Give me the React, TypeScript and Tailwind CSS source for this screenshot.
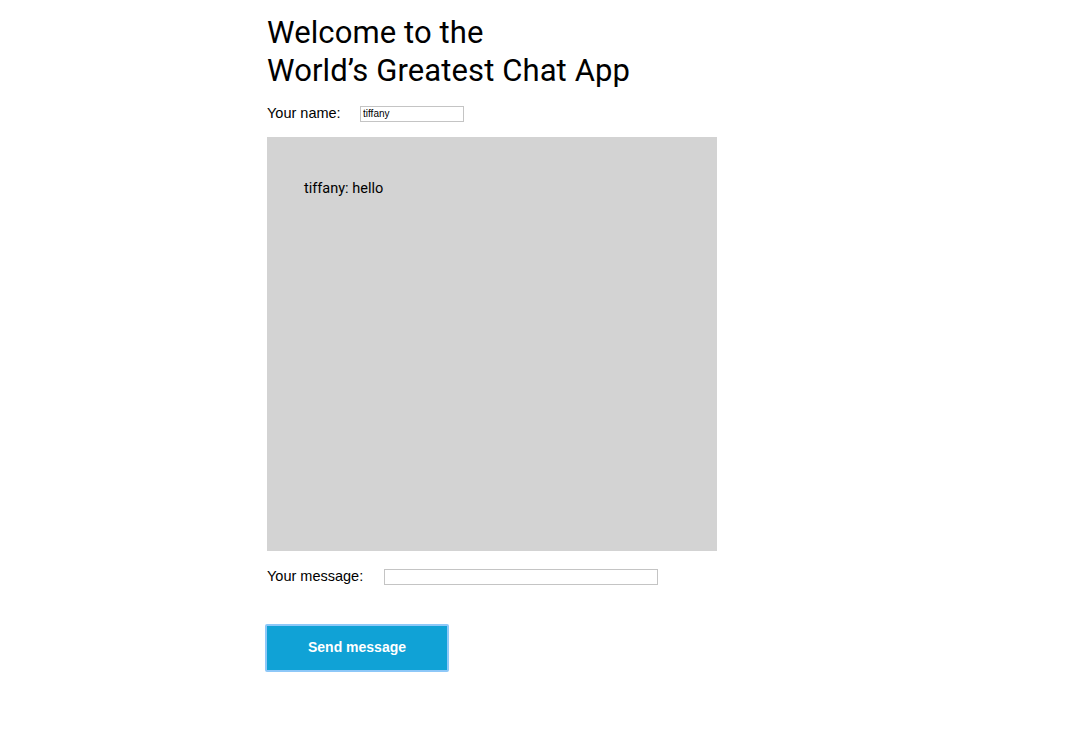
export default function App() {
  return (
    <div className="min-h-screen bg-white pl-[267px] pt-[14px]">
      <div className="w-[450px]">
        <h1 className="font-['Roboto',sans-serif] text-[31px] leading-[38px] font-normal text-black tracking-[0.1px]">
          Welcome to the
          <br />
          World’s Greatest Chat App
        </h1>
        <div className="mt-[13px] flex items-center font-['Liberation_Sans',Arial,sans-serif] text-[14.5px] text-black">
          <span className="w-[93px]">Your name:</span>
          <input
            defaultValue="tiffany"
            className="h-[16px] w-[104px] border border-[#c4c4c4] px-[2px] text-[10px] leading-[14px] outline-none"
          />
        </div>
        <div className="mt-[12px] h-[414px] w-[450px] bg-[#d3d3d3] px-[37px] pt-[43px]">
          <p className="font-['Roboto',sans-serif] text-[14.5px] leading-[18px] text-black">tiffany: hello</p>
        </div>
        <div className="mt-[15px] flex items-center font-['Liberation_Sans',Arial,sans-serif] text-[14.5px] text-black">
          <span className="w-[117px]">Your message:</span>
          <input className="h-[16px] w-[274px] border border-[#c4c4c4] px-[2px] text-[10px] outline-none" />
        </div>
        <button className="ml-[-2px] mt-[36px] rounded-[2px] border-2 border-[#8ec8f8] bg-[#10a2d6] w-[184px] h-[48px] font-['Liberation_Sans',Arial,sans-serif] text-[14px] font-semibold text-white">
          Send message
        </button>
      </div>
    </div>
  );
}
